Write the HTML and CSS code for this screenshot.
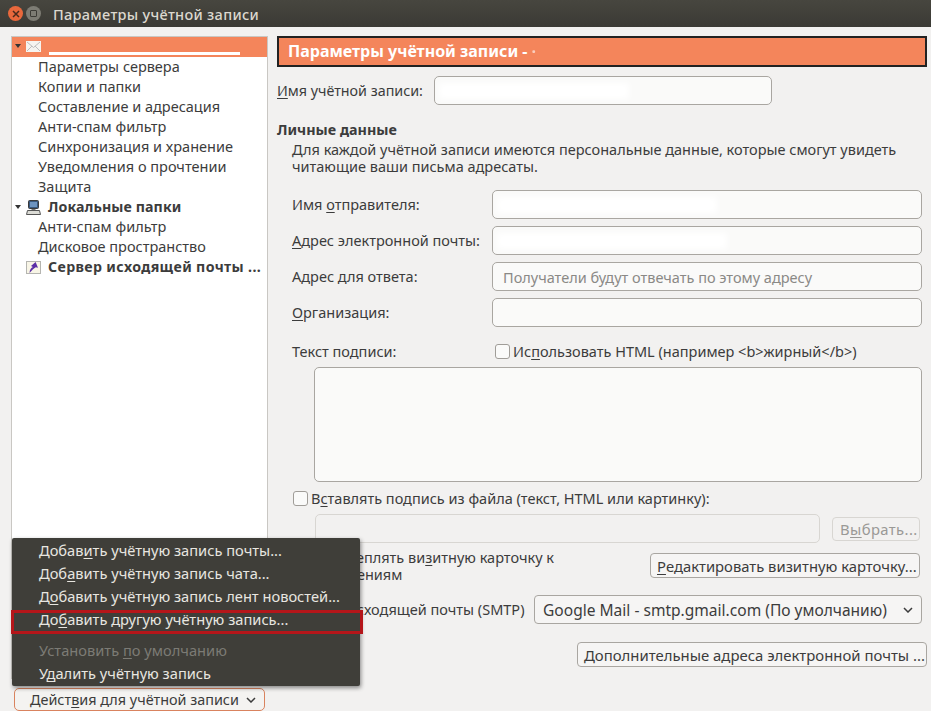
FILE: index.html
```html
<!DOCTYPE html>
<html lang="ru">
<head>
<meta charset="utf-8">
<title>Параметры учётной записи</title>
<link rel="stylesheet" href="styles.css">
</head>
<body>
<header class="titlebar">
  <span class="wbtn close"><svg width="8" height="8" viewBox="0 0 8 8"><path d="M1 1l6 6M7 1l-6 6" stroke="#4a2a1c" stroke-width="1.5"/></svg></span>
  <span class="wbtn max"><span class="maxbox"></span></span>
  <span class="wintitle">Параметры учётной записи</span>
</header>
<div class="main">
  <aside class="side">
    <div class="tree">
      <div class="row selected">
        <span class="tri"></span>
        <svg class="ticon" width="15" height="11" viewBox="0 0 15 11"><rect width="15" height="11" fill="#f6f4f0"/><path d="M1 1l6.5 5.5L14 1M1 10l5-5M14 10L9 5" fill="none" stroke="#bdbdbd"/></svg>
        <span class="smear"></span>
      </div>
      <div class="row sub">Параметры сервера</div>
      <div class="row sub">Копии и папки</div>
      <div class="row sub">Составление и адресация</div>
      <div class="row sub">Анти-спам фильтр</div>
      <div class="row sub">Синхронизация и хранение</div>
      <div class="row sub">Уведомления о прочтении</div>
      <div class="row sub">Защита</div>
      <div class="row">
        <span class="tri"></span>
        <svg class="ticon" width="15" height="15" viewBox="0 0 15 15"><rect x="2.5" y=".5" width="10" height="8" rx="1" fill="#39597f" stroke="#3a3a3a"/><rect x="4" y="2" width="7" height="5" fill="#6c93bf"/><rect x="5.5" y="9" width="4" height="1.5" fill="#777"/><path d="M1.5 10.5h12l1 4H.5z" fill="#dcdcd6" stroke="#555"/></svg>
        <b class="tlabel">Локальные папки</b>
      </div>
      <div class="row sub">Анти-спам фильтр</div>
      <div class="row sub">Дисковое пространство</div>
      <div class="row">
        <span class="tri-space"></span>
        <svg class="ticon" width="15" height="13" viewBox="0 0 15 13"><rect x=".5" y=".5" width="14" height="12" fill="#f8f5e6" stroke="#b5b5b0"/><path d="M3.5 12c.2-3.2 1.6-5 3.4-5.9L5 5 9.6 1 12 6.8 9.8 6.2C7.8 7.4 5.8 9.4 3.5 12z" fill="#5b2ea6"/></svg>
        <b class="tlabel wide">Сервер исходящей почты ...</b>
      </div>
    </div>
    <button class="btn actions"><span>Дейст<u>в</u>ия для учётной записи</span>
      <svg width="10" height="6" viewBox="0 0 10 6"><path d="M1 1l4 4 4-4" fill="none" stroke="#3c3c3c" stroke-width="1.5"/></svg>
    </button>
  </aside>
  <section class="content">
    <h1 class="banner">Параметры учётной записи - <span class="dot">·</span></h1>
    <div class="name-row">
      <label class="name-label"><u>И</u>мя учётной записи:</label>
      <div class="field name"><span class="smudge s1"></span></div>
    </div>
    <h2 class="sect">Личные данные</h2>
    <p class="desc">Для каждой учётной записи имеются персональные данные, которые смогут увидеть читающие ваши письма адресаты.</p>
    <div class="form">
      <label>Имя <u>о</u>тправителя:</label><div class="field"><span class="smudge s2"></span></div>
      <label><u>А</u>дрес электронной почты:</label><div class="field"><span class="smudge s3"></span></div>
      <label>А<u>д</u>рес для ответа:</label><div class="field ph">Получатели будут отвечать по этому адресу</div>
      <label><u>О</u>рганизация:</label><div class="field"></div>
    </div>
    <div class="sig-head">
      <label>Текст подписи:</label>
      <span class="check"><span class="box"></span>Ис<u>п</u>ользовать HTML (например &lt;b&gt;жирный&lt;/b&gt;)</span>
    </div>
    <div class="field area"></div>
    <div class="check file"><span class="box"></span>В<u>с</u>тавлять подпись из файла (текст, HTML или картинку):</div>
    <div class="file-row">
      <div class="field off"></div>
      <button class="btn off pick">В<u>ы</u>брать...</button>
    </div>
    <div class="vcard-row">
      <div class="check vcard"><span class="box"></span><span>Прикреплять ви<u>з</u>итную карточку к сообщениям</span></div>
      <button class="btn edit"><u>Р</u>едактировать визитную карточку...</button>
    </div>
    <div class="smtp-row">
      <label>Сервер исходящей почты (SMTP)</label>
      <button class="btn select"><span>Google Mail - smtp.gmail.com (По умолчанию)</span>
        <svg width="10" height="6" viewBox="0 0 10 6"><path d="M1 1l4 4 4-4" fill="none" stroke="#3c3c3c" stroke-width="1.5"/></svg>
      </button>
    </div>
    <div class="more-row">
      <button class="btn more"><u>Д</u>ополнительные адреса электронной почты ...</button>
    </div>
  </section>
</div>
<nav class="menu">
  <div class="mi">Добав<u>и</u>ть учётную запись почты...</div>
  <div class="mi">Доб<u>а</u>вить учётную запись чата...</div>
  <div class="mi">Д<u>о</u>бавить учётную запись лент новостей...</div>
  <div class="mi">До<u>б</u>авить другую учётную запись...</div>
  <div class="sep"></div>
  <div class="mi dim">Установить <u>п</u>о умолчанию</div>
  <div class="mi">У<u>д</u>алить учётную запись</div>
</nav>
<div class="redbox"></div>
</body>
</html>
```
FILE: styles.css
```css
* { box-sizing: border-box; }
html, body { margin: 0; height: 711px; overflow: hidden; }
body {
  position: relative;
  background: #f2f1f0;
  color: #3c3c3c;
  font: 14.5px/20px "Noto Sans", sans-serif;
}
u { text-underline-offset: 2px; text-decoration-thickness: 1px; }
.titlebar {
  height: 27px;
  display: flex;
  align-items: center;
  padding-left: 8px;
  gap: 3px;
  background: linear-gradient(#47463f, #3b3a35);
  color: #dcd8cf;
}
.wbtn { width: 15px; height: 15px; border-radius: 50%; display: flex; align-items: center; justify-content: center; }
.close { background: #e9683c; }
.max { background: #7d7c74; }
.maxbox { width: 7px; height: 7px; border: 1px solid #3c3b36; border-radius: 1px; }
.wintitle { margin-left: 9px; font-weight: 500; font-size: 14.5px; letter-spacing: .3px; }
.main { display: flex; padding: 9px 0 0 11px; height: 684px; gap: 9px; }
.side { width: 257px; flex: none; display: flex; flex-direction: column; }
.tree { height: 643px; background: #fff; border: 1px solid #c9c7c3; }
.row { height: 20px; display: flex; align-items: center; white-space: nowrap; position: relative; }
.selected { background: #f4855b; }
.sub { padding: 0 0 2px 26px; }
.tri { width: 0; height: 0; margin: 0 5px 0 3px; border: 3px solid transparent; border-top: 4px solid #333; border-bottom: 0; }
.selected .tri { margin-top: -3px; }
.tri-space { width: 14px; }
.ticon { flex: none; margin-right: 6px; }
.row:first-child .ticon { margin-top: -2px; }
.tlabel { margin-left: 1px; font-weight: 700; font-size: 14.2px; letter-spacing: .1px; }
.wide { letter-spacing: .35px; }
.smear { position: absolute; left: 37px; top: 15px; width: 191px; height: 3px; background: #fff; }
.btn {
  display: inline-flex; align-items: center; font: inherit; font-size: 14.8px; color: inherit;
  background: #f6f5f4; border: 1px solid #a9a6a1; border-radius: 4px; white-space: nowrap;
}
.btn.actions { margin: 9px 0 0 3px; width: 251px; height: 23px; padding: 0 8px 0 15px; border-color: #d9835e; border-radius: 5px; justify-content: space-between; font-size: 14.4px; background: #f4f3f1; }
.content { flex: 1; min-width: 0; padding-right: 4px; display: flex; flex-direction: column; }
.banner {
  margin: 0; height: 31px; padding-left: 9px;
  background: #f4855b; border: 2px solid #222;
  color: #fff; font-size: 16px; line-height: 27px; font-weight: 700;
}
.dot { opacity: .6; }
.name-row { display: flex; align-items: center; margin-top: 9px; }
.name-label { width: 157px; font-size: 14.3px; }
.field {
  height: 29px; border: 1px solid #a9a6a1; border-radius: 5px; background: #fafaf9;
  display: flex; align-items: center; padding-left: 10px; overflow: hidden;
}
.name { width: 338px; }
.smudge { height: 16px; background: #fff; filter: blur(3px); margin-left: -6px; }
.s1 { width: 190px; }
.s2 { width: 220px; }
.s3 { width: 230px; }
.sect { margin: 15px 0 0; font-size: 14.3px; line-height: 20px; font-weight: 700; }
.desc { margin: 0 0 0 15px; width: 625px; line-height: 17px; padding-top: 1px; }
.form { display: grid; grid-template-columns: 200px 430px; row-gap: 7px; margin: 15px 0 0 15px; align-items: center; }
.form label { padding-bottom: 2px; }
.ph { color: #8a8986; }
.sig-head { display: flex; margin: 14px 0 0 15px; height: 20px; align-items: center; }
.sig-head label { width: 203px; }
.check { display: flex; align-items: center; white-space: nowrap; }
.box { width: 15px; height: 15px; border: 1px solid #a09d98; border-radius: 3px; background: #fafaf9; margin-right: 3px; flex: none; }
.area { width: 608px; height: 115px; margin: 6px 0 0 37px; }
.file { margin: 6px 0 0 16px; }
.file-row { display: flex; align-items: center; margin: 6px 0 0 38px; gap: 12px; }
.field.off { background: #f2f1f0; border-color: #d8d6d2; color: #9a9996; }
.file-row .field { width: 505px; }
.btn.off { background: #f2f1f0; border-color: #d8d6d2; color: #9a9996; }
.pick { width: 88px; height: 24px; padding-left: 7px; letter-spacing: .4px; }
.vcard-row { display: flex; justify-content: space-between; align-items: center; height: 37px; margin: 4px 7px 0 16px; }
.vcard { width: 280px; white-space: normal; line-height: 17px; }
.edit { width: 270px; height: 25px; padding-left: 6px; }
.smtp-row { display: flex; justify-content: space-between; align-items: center; margin: 11px 5px 0 16px; }
.smtp-row label { padding-bottom: 2px; }
.btn.select { width: 388px; height: 29px; padding: 0 8px 0 8px; justify-content: space-between; font-size: 15.55px; }
.more-row { display: flex; justify-content: flex-end; margin: 18px 0 0 0; }
.more { width: 350px; height: 25px; padding-left: 6px; font-size: 14.9px; }
.menu {
  position: absolute; left: 12px; top: 538px; width: 348px; height: 148px;
  background: #3f3e39; color: #e8e6e0; padding-top: 1px; border-radius: 2px;
  box-shadow: 1px 2px 4px rgba(0,0,0,.45); font-size: 14.65px;
}
.mi { height: 23px; line-height: 23px; padding-left: 27px; white-space: nowrap; }
.dim { color: #7c7b75; }
.sep { height: 8px; }
.redbox { position: absolute; left: 11px; top: 610px; width: 352px; height: 24px; border: 3px solid #b5161a; }
```
